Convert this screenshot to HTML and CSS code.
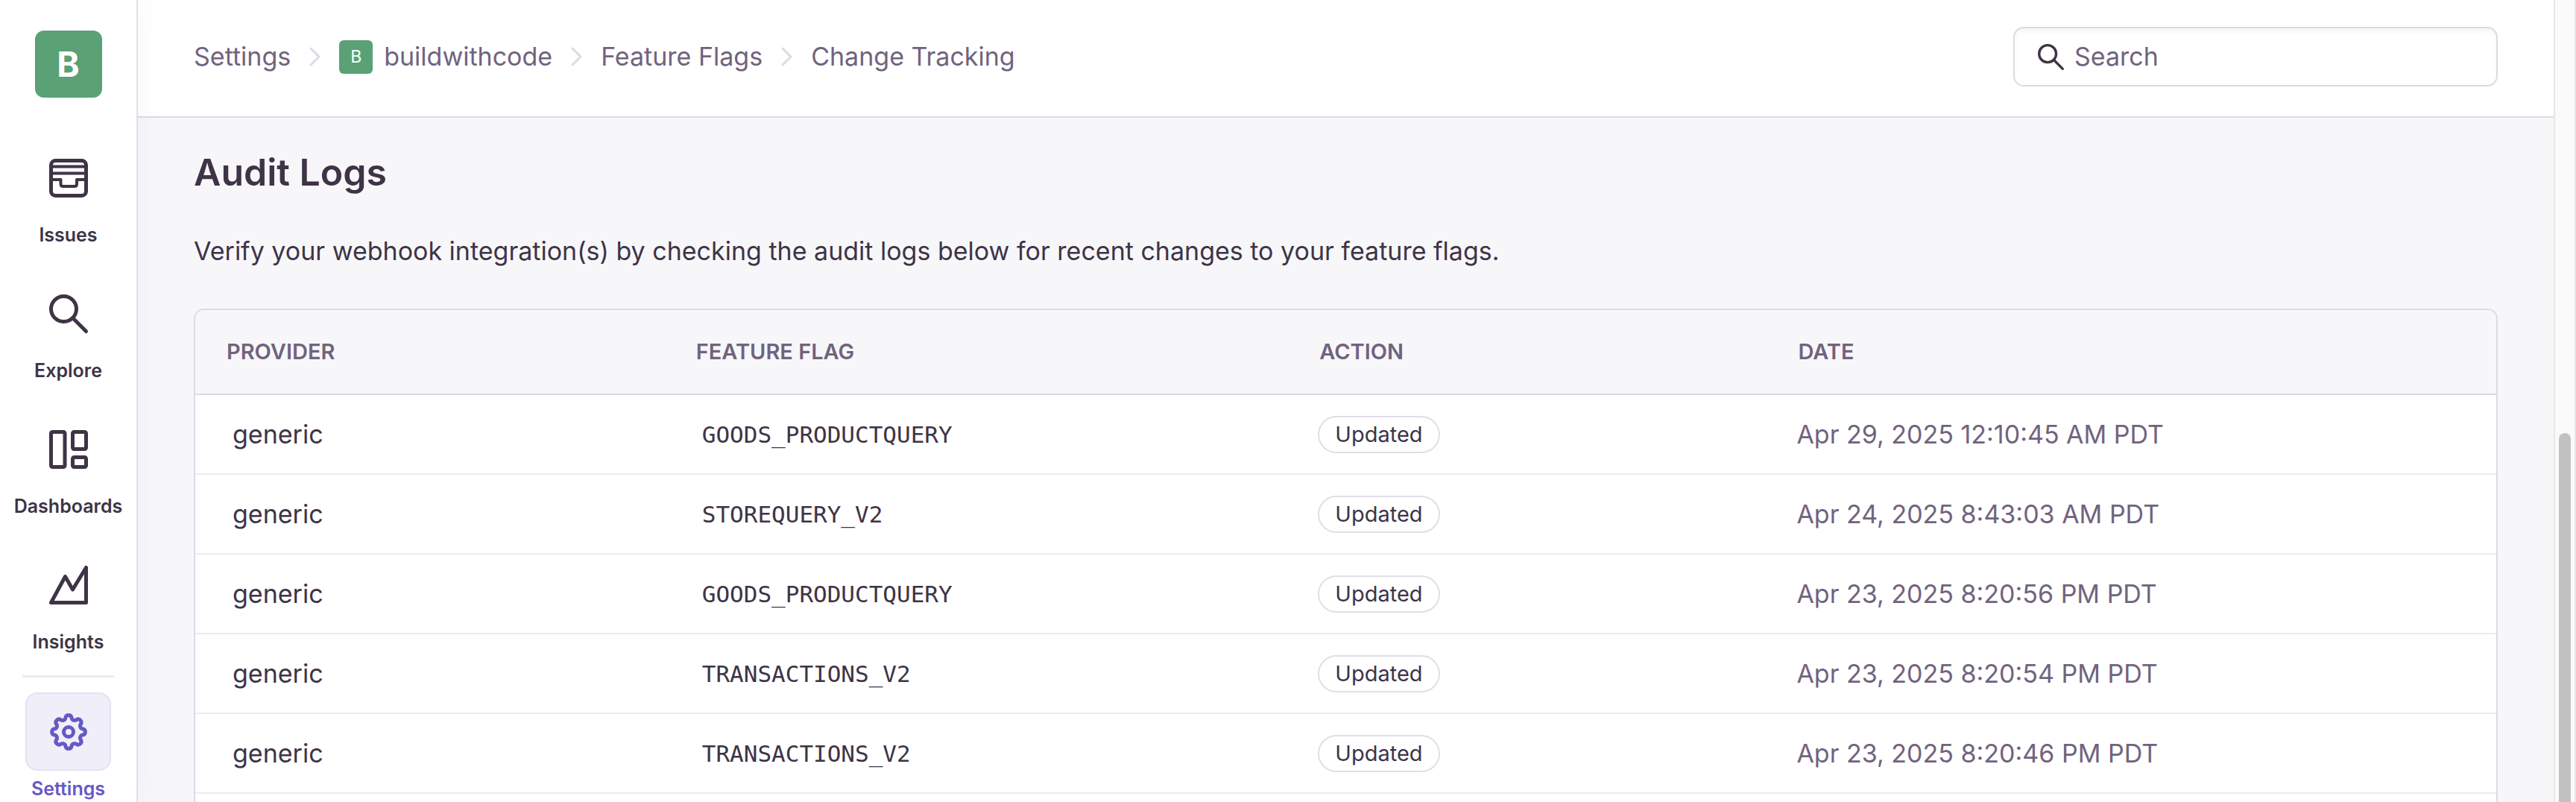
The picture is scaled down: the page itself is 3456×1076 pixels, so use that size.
FILE: index.html
```
<!DOCTYPE html>
<html lang="en">
<head>
<meta charset="utf-8">
<title>Change Tracking</title>
<link rel="stylesheet" href="styles.css">
</head>
<body>
<div class="app">
  <nav class="sidebar" aria-label="Primary">
    <a class="org-logo" href="#">B</a>
    <div class="nav-list">
      <a class="nav-item" href="#">
        <span class="nav-icon"><svg viewBox="0 0 52 52"><rect x="2.5" y="2.5" width="47" height="47" rx="6"/><path stroke-width="4" d="M3 10.5H49M3 19.5H49M3 28H15.500V34Q15.500 37 18.500 37H34Q37 37 37 34V28H49"/></svg></span>
        <span class="nav-label">Issues</span>
      </a>
      <a class="nav-item" href="#">
        <span class="nav-icon"><svg viewBox="0 0 52 52"><circle cx="19.500" cy="19.500" r="17"/><path d="M32 32L49.500 49.500"/></svg></span>
        <span class="nav-label">Explore</span>
      </a>
      <a class="nav-item" href="#">
        <span class="nav-icon"><svg viewBox="0 0 52 52"><rect x="2.5" y="2.5" width="18.500" height="47" rx="2"/><rect x="31.500" y="2.5" width="18" height="23" rx="2"/><rect x="31.500" y="36.500" width="18" height="13" rx="2"/></svg></span>
        <span class="nav-label">Dashboards</span>
      </a>
      <a class="nav-item" href="#">
        <span class="nav-icon"><svg viewBox="0 0 52 52"><path d="M2.500 49.500L21.500 14.500L31.500 32L49.500 2.500V49.500Z"/></svg></span>
        <span class="nav-label">Insights</span>
      </a>
    </div>
    <hr class="nav-divider">
    <a class="nav-item nav-item-active" href="#" aria-current="page">
      <span class="nav-icon"><svg viewBox="0 0 52 52"><path d="M45.100 21.900A4.200 4.200 0 0 1 45.100 30.100A4 4 0 0 0 42.400 36.600A4.200 4.200 0 0 1 36.600 42.400A4 4 0 0 0 30.100 45.100A4.200 4.200 0 0 1 21.900 45.100A4 4 0 0 0 15.400 42.400A4.200 4.200 0 0 1 9.600 36.600A4 4 0 0 0 6.900 30.100A4.200 4.200 0 0 1 6.900 21.900A4 4 0 0 0 9.600 15.400A4.200 4.200 0 0 1 15.400 9.600A4 4 0 0 0 21.900 6.900A4.200 4.200 0 0 1 30.100 6.900A4 4 0 0 0 36.600 9.600A4.200 4.200 0 0 1 42.400 15.400A4 4 0 0 0 45.100 21.900Z"/><circle cx="26" cy="26" r="6.500"/></svg></span>
      <span class="nav-label">Settings</span>
    </a>
  </nav>

  <div class="page">
    <header class="topbar">
      <nav class="breadcrumbs" aria-label="Breadcrumb">
        <a href="#">Settings</a>
        <svg class="chevron" viewBox="0 0 15 26"><path d="M2 2L13 13L2 24"/></svg>
        <a class="crumb-org" href="#"><span class="org-badge">B</span>buildwithcode</a>
        <svg class="chevron" viewBox="0 0 15 26"><path d="M2 2L13 13L2 24"/></svg>
        <a href="#">Feature Flags</a>
        <svg class="chevron" viewBox="0 0 15 26"><path d="M2 2L13 13L2 24"/></svg>
        <a href="#">Change Tracking</a>
      </nav>
      <label class="search">
        <svg class="search-icon" viewBox="0 0 52 52"><circle cx="19.500" cy="19.500" r="17"/><path d="M32 32L49.500 49.500"/></svg>
        <input class="search-input" type="search" placeholder="Search" aria-label="Search">
      </label>
    </header>

    <main class="content">
      <h1 class="title">Audit Logs</h1>
      <p class="intro">Verify your webhook integration(s) by checking the audit logs below for recent changes to your feature flags.</p>
      <div class="panel">
        <table class="logs">
          <colgroup><col class="col-provider"><col class="col-flag"><col class="col-action"><col></colgroup>
          <thead>
            <tr><th scope="col">PROVIDER</th><th scope="col">FEATURE FLAG</th><th scope="col">ACTION</th><th scope="col">DATE</th></tr>
          </thead>
          <tbody>
            <tr><td class="inset">generic</td><td class="inset flag">GOODS_PRODUCTQUERY</td><td><span class="tag">Updated</span></td><td class="date">Apr 29, 2025 12:10:45 AM PDT</td></tr>
            <tr><td class="inset">generic</td><td class="inset flag">STOREQUERY_V2</td><td><span class="tag">Updated</span></td><td class="date">Apr 24, 2025 8:43:03 AM PDT</td></tr>
            <tr><td class="inset">generic</td><td class="inset flag">GOODS_PRODUCTQUERY</td><td><span class="tag">Updated</span></td><td class="date">Apr 23, 2025 8:20:56 PM PDT</td></tr>
            <tr><td class="inset">generic</td><td class="inset flag">TRANSACTIONS_V2</td><td><span class="tag">Updated</span></td><td class="date">Apr 23, 2025 8:20:54 PM PDT</td></tr>
            <tr><td class="inset">generic</td><td class="inset flag">TRANSACTIONS_V2</td><td><span class="tag">Updated</span></td><td class="date">Apr 23, 2025 8:20:46 PM PDT</td></tr>
          </tbody>
        </table>
      </div>
    </main>
  </div>

  <div class="scroll-track" aria-hidden="true"><div class="scroll-thumb"></div></div>
</div>
</body>
</html>
```
FILE: styles.css
```
:root {
  --text: #3e3446;
  --subtext: #71637e;
  --border: #dcdbe4;
  --inner-border: #ebebf1;
  --surface: #f7f7fa;
  --accent: #6559c5;
  --green: #5aa175;
}

* { box-sizing: border-box; }

body {
  margin: 0;
  overflow: hidden;
  color: var(--text);
  font: 400 34px/50px Inter, Roboto, sans-serif;
}

a { color: inherit; text-decoration: none; }

.app {
  display: flex;
  height: 100vh;
  overflow: hidden;
}

/* Sidebar */
.sidebar {
  z-index: 1;
  display: flex;
  flex: none;
  flex-direction: column;
  align-items: center;
  width: 185px;
  padding-top: 41px;
  border-right: 2px solid #e4deea;
  background: #fff;
  box-shadow: 0 0 40px rgba(45, 35, 75, 0.04);
}

.org-logo {
  display: flex;
  flex: none;
  align-items: center;
  justify-content: center;
  width: 90px;
  height: 90px;
  margin-bottom: 55px;
  border-radius: 12px;
  background: var(--green);
  color: #fff;
  font-size: 46px;
  font-weight: 700;
}

.nav-list {
  display: flex;
  flex-direction: column;
  gap: 38px;
}

.nav-item {
  display: flex;
  flex: none;
  flex-direction: column;
  align-items: center;
  gap: 9px;
}

.nav-icon {
  display: flex;
  align-items: center;
  justify-content: center;
  width: 115px;
  height: 105px;
  border: 2px solid transparent;
  border-radius: 16px;
}

.nav-icon svg { width: 52px; height: 52px; }

svg {
  flex: none;
  overflow: visible;
  fill: none;
  stroke: currentColor;
  stroke-width: 5;
  stroke-linecap: round;
  stroke-linejoin: round;
}

.nav-label {
  font-size: 25px;
  font-weight: 600;
  line-height: 30px;
}

.nav-divider {
  flex: none;
  width: 123px;
  height: 3px;
  margin: 30px 0 20px;
  border: 0;
  background: var(--inner-border);
}

.nav-item-active { color: var(--accent); }

.nav-item-active .nav-icon {
  border-color: #e4e1f4;
  background: #f0eef8;
}

/* Page */
.page {
  display: flex;
  flex: 1;
  flex-direction: column;
  min-width: 0;
  background: var(--surface);
}

.topbar {
  display: flex;
  flex: none;
  align-items: center;
  justify-content: space-between;
  padding: 36px 75px 40px;
  border-bottom: 2px solid var(--border);
  background: #fff;
}

.breadcrumbs {
  display: flex;
  align-items: center;
  gap: 25px;
  color: var(--subtext);
  white-space: nowrap;
}

.chevron {
  width: 15px;
  height: 26px;
  color: var(--border);
  stroke-width: 3;
}

.crumb-org {
  display: flex;
  align-items: center;
  gap: 15px;
}

.org-badge {
  display: flex;
  align-items: center;
  justify-content: center;
  width: 45px;
  height: 45px;
  border-radius: 6px;
  background: var(--green);
  color: #fff;
  font-size: 23px;
}

.search {
  display: flex;
  align-items: center;
  gap: 14px;
  width: 650px;
  height: 80px;
  padding: 0 31px;
  border: 2px solid var(--border);
  border-radius: 14px;
  box-shadow: inset 0 4px 6px rgba(43, 34, 51, 0.04);
}

.search-icon { width: 35px; height: 35px; }

.search-input {
  flex: 1;
  min-width: 0;
  padding: 0;
  border: 0;
  outline: 0;
  background: transparent;
  color: var(--text);
  font: inherit;
}

.search-input::placeholder { color: var(--subtext); opacity: 1; }

.content {
  display: flex;
  flex: 1;
  flex-direction: column;
  min-height: 0;
  padding: 43px 75px 0;
}

.title {
  margin: 0 0 51px;
  font-size: 50px;
  font-weight: 600;
  line-height: 60px;
}

.intro { margin: 0 0 52px; }

/* Audit log table */
.panel {
  flex: 1;
  min-height: 0;
  overflow: hidden;
  border: 2px solid var(--border);
  border-bottom: 0;
  border-radius: 14px 14px 0 0;
  background: #fff;
}

.logs {
  width: 100%;
  border-spacing: 0;
  table-layout: fixed;
}

.col-provider { width: 20.4%; }
.col-flag { width: 27.1%; }
.col-action { width: 20.8%; }

.logs th,
.logs td {
  padding: 0 40px;
  text-align: left;
  white-space: nowrap;
}

.logs th {
  height: 114px;
  padding-left: 42px;
  border-bottom: 2px solid var(--border);
  background: var(--surface);
  color: var(--subtext);
  font-size: 29px;
  font-weight: 600;
}

.logs td {
  height: 107px;
  border-bottom: 2px solid var(--inner-border);
}

.logs .inset { padding-left: 50px; }

.flag { font-family: "DejaVu Sans Mono", "Liberation Mono", monospace; font-size: 31px; }

.date { color: var(--subtext); }

.tag {
  display: flex;
  align-items: center;
  width: max-content;
  height: 50px;
  padding: 0 21px;
  border: 2px solid #e2dde8;
  border-radius: 25px;
  font-size: 29px;
}

/* Scrollbar */
.scroll-track {
  display: flex;
  flex: none;
  flex-direction: column;
  align-items: center;
  width: 30px;
  border: solid #e7e7e7;
  border-width: 0 2px;
  background: #fafafa;
}

.scroll-thumb {
  flex: 1;
  width: 16px;
  margin-top: 54vh;
  border-radius: 8px 8px 0 0;
  background: #c1c1c1;
}
```
